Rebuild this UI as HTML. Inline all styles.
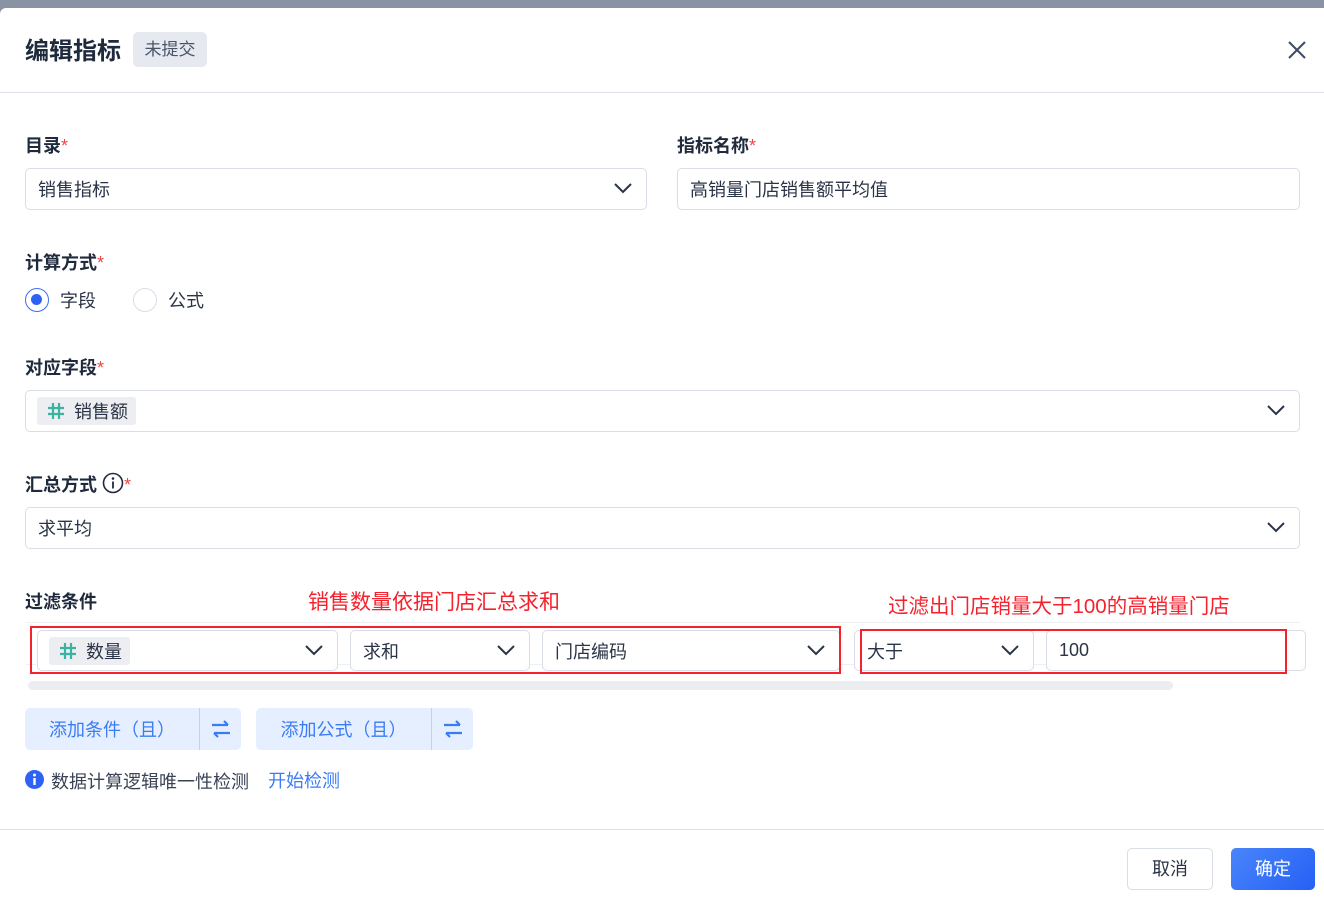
<!DOCTYPE html>
<html><head><meta charset="utf-8"><style>
*{box-sizing:border-box;margin:0;padding:0}
body{width:1324px;height:905px;position:relative;overflow:hidden;background:#8a93a3;font-family:"Liberation Sans","Noto Sans CJK SC",sans-serif;color:#2b3446}
.modal{position:absolute;left:0;top:8px;width:1324px;height:897px;background:#fff;border-top-left-radius:6px}
.a{position:absolute}
.lbl{position:absolute;font-size:18px;font-weight:bold;color:#1f2a3d}
.lbl i{color:#f04444;font-style:normal;font-weight:normal}
.box{position:absolute;border:1px solid #d9dde5;border-radius:5px;background:#fff;font-size:18px;color:#2b3446;display:flex;align-items:center;padding-left:12px}
.chev{position:absolute;right:14px;top:50%;margin-top:-6px}
.tag{background:#eceef2;border-radius:3px;height:28px;display:flex;align-items:center;padding:0 8px 0 10px;margin-left:-1px}
.tag svg{margin-right:9px}
.red{position:absolute;border:2.5px solid #f5222d}
.rt{position:absolute;color:#f5222d;font-size:21px}
.btn{position:absolute;height:42px;background:#e5efff;border-radius:5px;color:#3b7cf5;font-size:18px;display:flex;align-items:center}
</style></head><body>
<div class="modal">
<div class="a" style="left:25px;top:23px;font-size:24px;font-weight:bold;color:#1f2a3d">编辑指标</div>
<div class="a" style="left:133px;top:24px;width:74px;height:35px;background:#e6e9f0;border-radius:5px;font-size:17px;color:#4a5468;text-align:center;line-height:35px">未提交</div>
<svg class="a" style="left:1287px;top:32px" width="20" height="20" viewBox="0 0 20 20"><path d="M2 2L18 18M18 2L2 18" stroke="#3f4b63" stroke-width="2"/></svg>
<div class="a" style="left:0;top:84px;width:1324px;height:1px;background:#dde1e8"></div>

<div class="lbl" style="left:25px;top:124px">目录<i>*</i></div>
<div class="box" style="left:25px;top:160px;width:622px;height:42px">销售指标<svg class="chev" width="18" height="11" viewBox="0 0 18 11"><path d="M1 1l8 8 8-8" fill="none" stroke="#2b3446" stroke-width="2"/></svg></div>
<div class="lbl" style="left:677px;top:124px">指标名称<i>*</i></div>
<div class="box" style="left:677px;top:160px;width:623px;height:42px">高销量门店销售额平均值</div>

<div class="lbl" style="left:25px;top:241px">计算方式<i>*</i></div>
<div class="a" style="left:25px;top:280px;width:24px;height:24px;border:1.5px solid #3b6ef5;border-radius:50%"><div style="position:absolute;left:5px;top:5px;width:11px;height:11px;border-radius:50%;background:#2e62f5"></div></div>
<div class="a" style="left:60px;top:279px;font-size:18px">字段</div>
<div class="a" style="left:133px;top:280px;width:24px;height:24px;border:1.5px solid #d9dde5;border-radius:50%"></div>
<div class="a" style="left:168px;top:279px;font-size:18px">公式</div>

<div class="lbl" style="left:25px;top:346px">对应字段<i>*</i></div>
<div class="box" style="left:25px;top:382px;width:1275px;height:42px"><div class="tag"><svg width="18" height="18" viewBox="0 0 18 18"><path d="M6 1v16M12 1v16M1 6h16M1 12h16" stroke="#3bb3a0" stroke-width="2.2"/></svg>销售额</div><svg class="chev" width="18" height="11" viewBox="0 0 18 11"><path d="M1 1l8 8 8-8" fill="none" stroke="#2b3446" stroke-width="2"/></svg></div>

<div class="lbl" style="left:25px;top:463px">汇总方式 <svg style="vertical-align:-3px" width="22" height="22" viewBox="0 0 22 22"><circle cx="11" cy="11" r="9.5" fill="none" stroke="#1f2a3d" stroke-width="1.6"/><circle cx="11" cy="6.5" r="1.3" fill="#1f2a3d"/><path d="M11 9.5v7" stroke="#1f2a3d" stroke-width="1.8"/></svg><i>*</i></div>
<div class="box" style="left:25px;top:499px;width:1275px;height:42px">求平均<svg class="chev" width="18" height="11" viewBox="0 0 18 11"><path d="M1 1l8 8 8-8" fill="none" stroke="#2b3446" stroke-width="2"/></svg></div>

<div class="lbl" style="left:25px;top:580px">过滤条件</div>
<div class="rt" style="left:308px;top:578px">销售数量依据门店汇总求和</div>
<div class="rt" style="left:888px;top:581px;font-size:20.5px">过滤出门店销量大于100的高销量门店</div>
<div class="a" style="left:26px;top:614px;width:1274px;height:1px;background:#eef0f3"></div>
<div class="a" style="left:26px;top:656px;width:1274px;height:1px;background:#eef0f3"></div>
<div class="box" style="left:37px;top:622px;width:301px;height:41px"><div class="tag"><svg width="18" height="18" viewBox="0 0 18 18"><path d="M6 1v16M12 1v16M1 6h16M1 12h16" stroke="#3bb3a0" stroke-width="2.2"/></svg>数量</div><svg class="chev" width="18" height="11" viewBox="0 0 18 11"><path d="M1 1l8 8 8-8" fill="none" stroke="#2b3446" stroke-width="2"/></svg></div>
<div class="box" style="left:350px;top:622px;width:180px;height:41px">求和<svg class="chev" width="18" height="11" viewBox="0 0 18 11"><path d="M1 1l8 8 8-8" fill="none" stroke="#2b3446" stroke-width="2"/></svg></div>
<div class="box" style="left:542px;top:622px;width:298px;height:41px">门店编码<svg class="chev" width="18" height="11" viewBox="0 0 18 11"><path d="M1 1l8 8 8-8" fill="none" stroke="#2b3446" stroke-width="2"/></svg></div>
<div class="box" style="left:854px;top:622px;width:180px;height:41px">大于<svg class="chev" width="18" height="11" viewBox="0 0 18 11"><path d="M1 1l8 8 8-8" fill="none" stroke="#2b3446" stroke-width="2"/></svg></div>
<div class="box" style="left:1046px;top:622px;width:260px;height:41px">100</div>
<div class="red" style="left:30px;top:618px;width:811px;height:48px"></div>
<div class="red" style="left:860px;top:621px;width:427px;height:45px"></div>
<div class="a" style="left:28px;top:673px;width:1145px;height:9px;background:#ebedf1;border-radius:5px"></div>

<div class="btn" style="left:25px;top:700px;width:216px"><span style="width:174px;text-align:center">添加条件（且）</span><div style="width:1px;height:42px;background:#bcd2f7"></div><svg style="margin-left:11px" width="20" height="18" viewBox="0 0 20 18"><path d="M1 5h16M13 1l4 4M19 13H3M7 17l-4-4" fill="none" stroke="#3b7cf5" stroke-width="2.2"/></svg></div>
<div class="btn" style="left:256px;top:700px;width:217px"><span style="width:175px;text-align:center">添加公式（且）</span><div style="width:1px;height:42px;background:#bcd2f7"></div><svg style="margin-left:11px" width="20" height="18" viewBox="0 0 20 18"><path d="M1 5h16M13 1l4 4M19 13H3M7 17l-4-4" fill="none" stroke="#3b7cf5" stroke-width="2.2"/></svg></div>

<svg class="a" style="left:25px;top:762px" width="19" height="19" viewBox="0 0 19 19"><circle cx="9.5" cy="9.5" r="9.5" fill="#2e62f5"/><circle cx="9.5" cy="5" r="1.5" fill="#fff"/><path d="M9.5 8v7" stroke="#fff" stroke-width="2.4"/></svg>
<div class="a" style="left:51px;top:760px;font-size:18px;color:#3a4356">数据计算逻辑唯一性检测</div>
<div class="a" style="left:268px;top:759px;font-size:18px;color:#3b7cf5">开始检测</div>

<div class="a" style="left:0;top:821px;width:1324px;height:1px;background:#dde1e8"></div>
<div class="a" style="left:1127px;top:840px;width:86px;height:42px;border:1px solid #d9dde5;border-radius:5px;text-align:center;line-height:40px;font-size:18px;color:#2b3446">取消</div>
<div class="a" style="left:1231px;top:840px;width:84px;height:42px;border-radius:5px;background:linear-gradient(135deg,#4a85fb,#2560f5);text-align:center;line-height:42px;font-size:18px;color:#fff">确定</div>
</div>
</body></html>
